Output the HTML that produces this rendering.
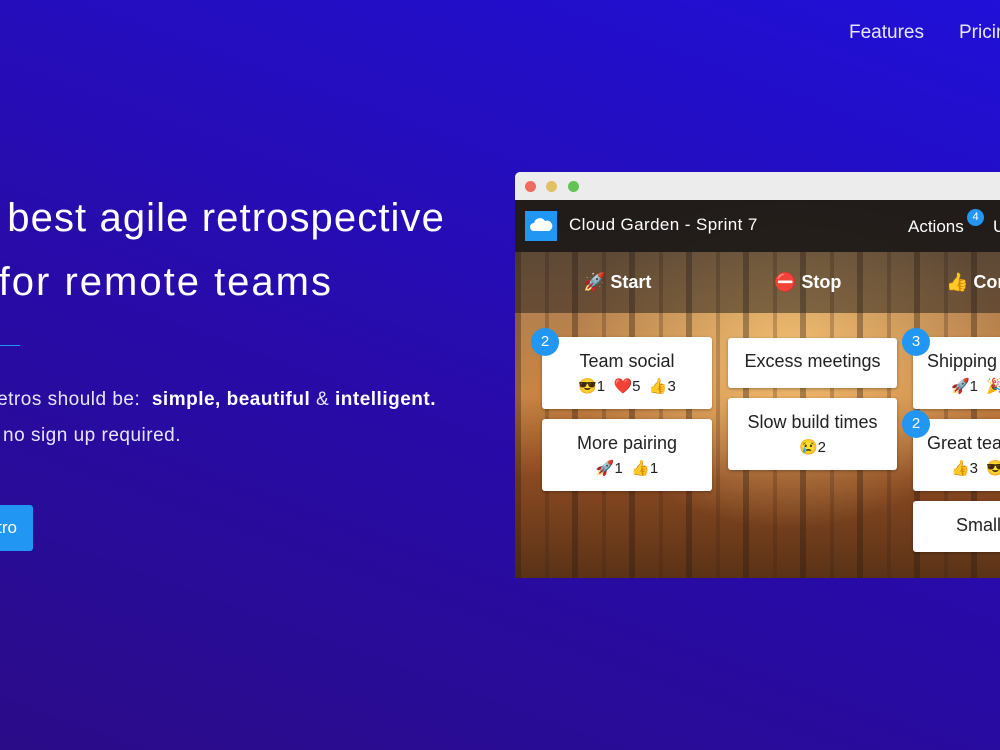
<!DOCTYPE html>
<html><head><meta charset="utf-8"><style>
*{margin:0;padding:0;box-sizing:border-box}
body{width:1000px;height:750px;overflow:hidden;position:relative;font-family:"Liberation Sans","Noto Sans CJK JP",sans-serif;
background:linear-gradient(20deg,#2a0c88 0%,#280ba8 45%,#2010d8 100%);color:#fff}
.abs{position:absolute;white-space:nowrap}
.h{font-size:40px;text-align:right}
.p{font-size:19px;text-align:right;color:#e8e6ff;letter-spacing:0.5px}
.win{position:absolute;left:515px;top:172px;width:500px;height:406px;overflow:hidden;border-radius:5px 0 0 0;
background:
radial-gradient(ellipse at 55% 45%,rgba(250,200,120,.85),rgba(0,0,0,0) 55%),
linear-gradient(180deg,#7a6a58 0%,#b08050 30%,#c88444 55%,#8a4a22 75%,#5a3216 100%)}
.trees{position:absolute;left:0;top:80px;width:100%;height:326px;background:repeating-linear-gradient(90deg,rgba(40,25,15,.35) 0 6px,rgba(0,0,0,0) 6px 30px,rgba(60,35,20,.25) 30px 34px,rgba(0,0,0,0) 34px 57px)}
.bar{position:absolute;left:0;top:0;width:100%;height:28px;background:#ececec}
.dot{position:absolute;top:9px;width:11px;height:11px;border-radius:50%}
.hdr{position:absolute;left:0;top:28px;width:100%;height:52px;background:rgba(25,22,22,.93)}
.colh{position:absolute;left:0;top:80px;width:100%;height:61px;background:rgba(30,25,25,.5)}
.card{position:absolute;background:#fff;border-radius:3px;color:#222;text-align:center;font-size:18px;box-shadow:0 1px 3px rgba(0,0,0,.3);white-space:nowrap}
.card .r{font-size:15px;margin-top:5px}
.badge{position:absolute;width:28px;height:28px;border-radius:50%;background:#2196f3;color:#fff;font-size:15px;text-align:center;line-height:28px}
.ch{position:absolute;top:100px;font-size:18px;font-weight:bold;color:#fff;white-space:nowrap}
</style></head><body>
<div class="abs" style="left:849px;top:22px;font-size:19px;color:#e8e6ff">Features</div>
<div class="abs" style="left:959px;top:22px;font-size:19px;color:#e8e6ff">Pricing</div>

<div class="abs h" style="right:555px;top:196px;letter-spacing:1.1px">The best agile retrospective</div>
<div class="abs h" style="right:667px;top:260px;letter-spacing:2px">for remote teams</div>
<div class="abs" style="left:0;top:345px;width:20px;height:1px;background:#2196f3"></div>
<div class="abs p" style="right:564px;top:389px">Retros should be:&nbsp; <b style="color:#fff">simple, beautiful</b> &amp; <b style="color:#fff">intelligent.</b></div>
<div class="abs p" style="right:819px;top:425px">Free, no sign up required.</div>
<div class="abs" style="left:-120px;top:505px;width:153px;height:46px;background:#2196f3;border-radius:3px;font-size:17px;line-height:46px;text-align:right;padding-right:16px">Demo retro</div>

<div class="win">
 <div class="trees"></div>
 <div class="bar"></div>
 <div class="dot" style="left:10px;background:#ec6a5e"></div>
 <div class="dot" style="left:31px;background:#e4c064"></div>
 <div class="dot" style="left:53px;background:#5fc454"></div>
 <div class="hdr">
  <div class="abs" style="left:10px;top:11px;width:32px;height:30px;background:#2196f3">
   <svg width="32" height="30" viewBox="0 0 32 30"><path d="M9 20 a4 4 0 0 1 0-8 a6 6 0 0 1 11-2 a5 5 0 0 1 4 10 z" fill="#fff"/></svg></div>
  <div class="abs" style="left:54px;top:15px;font-size:17px;letter-spacing:0.4px">Cloud Garden - Sprint 7</div>
  <div class="abs" style="left:393px;top:17px;font-size:17px">Actions</div>
  <div class="abs" style="left:452px;top:9px;width:17px;height:17px;border-radius:50%;background:#2196f3;font-size:11px;text-align:center;line-height:17px">4</div>
  <div class="abs" style="left:478px;top:17px;font-size:17px">U</div>
 </div>
 <div class="colh"></div>
 <div class="ch" style="left:68px">🚀 Start</div>
 <div class="ch" style="left:259px">⛔ Stop</div>
 <div class="ch" style="left:431px">👍 Continue</div>

 <div class="card" style="left:27px;top:165px;width:170px;height:72px;padding-top:14px">Team social<div class="r">😎1 &nbsp;❤️5 &nbsp;👍3</div></div>
 <div class="card" style="left:27px;top:247px;width:170px;height:72px;padding-top:14px">More pairing<div class="r">🚀1 &nbsp;👍1</div></div>
 <div class="card" style="left:213px;top:166px;width:169px;height:50px;padding-top:13px">Excess meetings</div>
 <div class="card" style="left:213px;top:226px;width:169px;height:72px;padding-top:14px">Slow build times<div class="r">😢2</div></div>
 <div class="card" style="left:398px;top:165px;width:120px;height:72px;padding-top:14px;text-align:left;padding-left:14px">Shipping<div class="r" style="padding-left:24px">🚀1 &nbsp;🎉</div></div>
 <div class="card" style="left:398px;top:247px;width:120px;height:72px;padding-top:14px;text-align:left;padding-left:14px">Great team<div class="r" style="padding-left:24px">👍3 &nbsp;😎</div></div>
 <div class="card" style="left:398px;top:329px;width:120px;height:51px;padding-top:14px;text-align:left;padding-left:43px">Small</div>
 <div class="badge" style="left:16px;top:156px">2</div>
 <div class="badge" style="left:387px;top:156px">3</div>
 <div class="badge" style="left:387px;top:238px">2</div>
</div>
</body></html>
